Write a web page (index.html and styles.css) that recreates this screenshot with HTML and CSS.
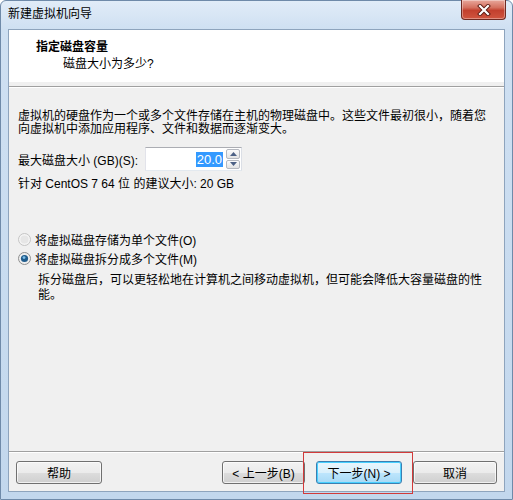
FILE: index.html
```html
<!DOCTYPE html>
<html lang="zh-CN">
<head>
<meta charset="utf-8">
<title>新建虚拟机向导</title>
<link rel="stylesheet" href="styles.css">
</head>
<body>
<div class="window">
  <div class="titlebar">
    <span class="title">新建虚拟机向导</span>
    <div class="close">
      <svg width="16" height="12" viewBox="0 0 16 12"><path d="M4 2 L12 10 M12 2 L4 10" stroke="#5a1a12" stroke-width="4" stroke-linecap="square"/><path d="M4 2 L12 10 M12 2 L4 10" stroke="#ffffff" stroke-width="2.2" stroke-linecap="square"/></svg>
    </div>
  </div>
  <div class="client">
    <div class="header">
      <div class="h-title">指定磁盘容量</div>
      <div class="h-sub">磁盘大小为多少?</div>
    </div>
    <div class="etched"></div>
    <div class="body">
      <p class="desc">虚拟机的硬盘作为一个或多个文件存储在主机的物理磁盘中。这些文件最初很小，随着您向虚拟机中添加应用程序、文件和数据而逐渐变大。</p>
      <div class="size-row">
        <span class="size-label">最大磁盘大小 (GB)(S):</span>
        <div class="spin">
          <div class="spin-field"><span class="sel">20.0</span></div>
          <div class="spin-btns">
            <div class="spin-btn"><svg width="7" height="4" viewBox="0 0 7 4"><path d="M0 4 L3.5 0 L7 4 Z" fill="#4d6185"/></svg></div>
            <div class="spin-btn"><svg width="7" height="4" viewBox="0 0 7 4"><path d="M0 0 L3.5 4 L7 0 Z" fill="#4d6185"/></svg></div>
          </div>
        </div>
      </div>
      <p class="hint">针对 CentOS 7 64 位 的建议大小: 20 GB</p>
      <div class="radios">
        <div class="radio-row">
          <svg class="radio" width="13" height="13" viewBox="0 0 13 13"><circle cx="6.5" cy="6.5" r="6" fill="#f4f4f4" stroke="#c4c4c4"/><circle cx="6.5" cy="6.5" r="4" fill="#e6e6e6"/></svg>
          <span>将虚拟磁盘存储为单个文件(O)</span>
        </div>
        <div class="radio-row">
          <svg class="radio" width="13" height="13" viewBox="0 0 13 13"><circle cx="6.5" cy="6.5" r="6" fill="#eeeeee" stroke="#8e8f8f"/><circle cx="6.5" cy="6.5" r="3.6" fill="#1f5c8c"/><circle cx="6" cy="5.6" r="1.4" fill="#7ec0ea"/></svg>
          <span>将虚拟磁盘拆分成多个文件(M)</span>
        </div>
        <p class="radio-desc">拆分磁盘后，可以更轻松地在计算机之间移动虚拟机，但可能会降低大容量磁盘的性能。</p>
      </div>
    </div>
    <div class="footer">
      <button class="btn btn-help">帮助</button>
      <div class="nav">
        <button class="btn btn-back">&lt; 上一步(B)</button>
        <button class="btn btn-next">下一步(N) &gt;</button>
        <button class="btn btn-cancel">取消</button>
      </div>
    </div>
  </div>
  <div class="highlight"></div>
</div>
</body>
</html>
```

FILE: styles.css
```css
* { box-sizing: border-box; }
html, body { margin: 0; padding: 0; }
body {
  font-family: "Liberation Sans", "Noto Sans CJK SC", sans-serif;
  font-size: 12px;
  color: #000;
  background: #fff;
}
.window {
  position: relative;
  width: 513px;
  height: 500px;
  display: flex;
  flex-direction: column;
  background: linear-gradient(180deg, #e1ecf8 0px, #cfe0f2 28px, #c2d7ed 100%);
  border: 1px solid #6f8aa9;
  border-radius: 6px 6px 0 0;
}
.titlebar {
  height: 28px;
  display: flex;
  align-items: flex-start;
  justify-content: space-between;
  padding-left: 7px;
}
.title {
  margin-top: 6px;
  line-height: 14px;
  color: #000;
}
.close {
  width: 45px;
  height: 20px;
  margin-top: -1px;
  margin-right: 6px;
  display: flex;
  align-items: center;
  justify-content: center;
  border: 1px solid #6e2a22;
  border-top: none;
  border-radius: 0 0 4px 4px;
  background: linear-gradient(180deg, #e8a89c 0%, #d4705f 40%, #c2402e 55%, #d0553f 100%);
  box-shadow: inset 0 0 0 1px rgba(255,255,255,0.35);
}
.client {
  flex: 1;
  margin: 0 7px 7px 7px;
  display: flex;
  flex-direction: column;
  background: #f0f0f0;
  border: 1px solid #8ea4bd;
}
.header {
  height: 52px;
  background: #fff;
  padding: 10px 0 0 27px;
}
.h-title {
  font-weight: bold;
  line-height: 14px;
}
.h-sub {
  margin-top: 3px;
  padding-left: 27px;
  line-height: 14px;
}
.etched {
  margin-top: 4px;
  border-top: 1px solid #a0a0a0;
  border-bottom: 1px solid #ffffff;
}
.body {
  flex: 1;
  padding: 22px 9px 0 9px;
}
.desc {
  margin: 0;
  line-height: 13px;
  width: 470px;
}
.size-row {
  display: flex;
  align-items: center;
  margin-top: 11px;
  height: 24px;
}
.size-label {
  width: 127px;
}
.spin {
  display: flex;
  height: 24px;
  width: 97px;
  border: 1px solid #abadb3;
  border-color: #abadb3 #dbdfe6 #e3e9ef #e2e3ea;
  background: #fff;
}
.spin-field {
  flex: 1;
  display: flex;
  align-items: center;
  justify-content: flex-end;
  padding-right: 2px;
}
.sel {
  background: #3399ff;
  color: #fff;
  font-size: 13px;
  line-height: 15px;
  padding: 0 1px;
}
.spin-btns {
  width: 16px;
  display: flex;
  flex-direction: column;
  gap: 1px;
  padding: 1px;
}
.spin-btn {
  flex: 1;
  display: flex;
  align-items: center;
  justify-content: center;
  border: 1px solid #b5b8bf;
  border-radius: 2px;
  background: linear-gradient(180deg, #fbfbfb, #e3e3e3);
}
.hint {
  margin: 6px 0 0 0;
  line-height: 14px;
}
.radios {
  margin-top: 39px;
}
.radio-row {
  display: flex;
  align-items: center;
  height: 19px;
  gap: 4px;
}
.radio { flex: none; }
.radio-desc {
  margin: 5px 0 0 20px;
  line-height: 15px;
  width: 460px;
}
.footer {
  height: 40px;
  border-top: 1px solid #a0a0a0;
  box-shadow: inset 0 1px 0 #ffffff;
  display: flex;
  justify-content: space-between;
  align-items: flex-start;
  padding: 9px 7px 0 7px;
}
.nav {
  display: flex;
  gap: 11px;
}
.btn {
  font-family: "Liberation Sans", "Noto Sans CJK SC", sans-serif;
  font-size: 12px;
  height: 23px;
  padding: 0;
  border: 1px solid #707070;
  border-radius: 3px;
  background: linear-gradient(180deg, #f2f2f2 0%, #ebebeb 50%, #dddddd 51%, #cfcfcf 100%);
  box-shadow: inset 0 0 0 1px rgba(255,255,255,0.7);
  color: #000;
}
.btn-help { width: 86px; }
.btn-back { width: 83px; }
.btn-next {
  width: 86px;
  border-color: #3c7fb1;
  background: linear-gradient(180deg, #eaf6fd 0%, #d9f0fc 50%, #bee6fd 51%, #a7d9f5 100%);
  box-shadow: inset 0 0 0 1px #48d0ff;
}
.btn-cancel { width: 84px; }
.highlight {
  position: absolute;
  left: 302px;
  top: 451px;
  width: 110px;
  height: 42px;
  border: 1px solid #d23a3a;
}
```
